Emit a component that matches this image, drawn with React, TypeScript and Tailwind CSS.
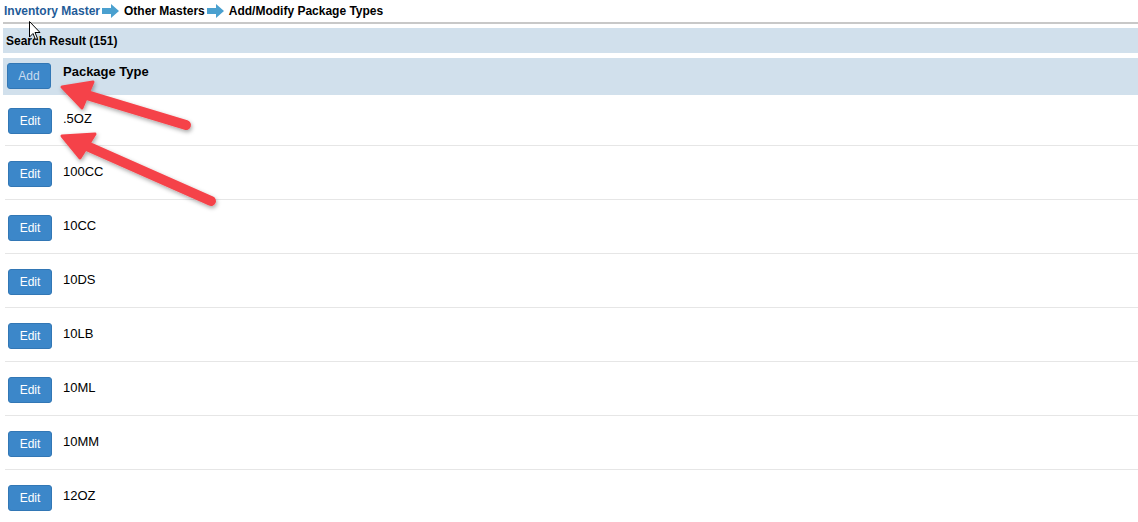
import React from "react"

const items = [".5OZ", "100CC", "10CC", "10DS", "10LB", "10ML", "10MM", "12OZ"]

function CrumbArrow() {
	return (
		<svg width="17" height="14" viewBox="0 0 17 14" className="ml-[2px] mr-[5px] shrink-0">
			<path d="M0 4 H9 V0 L17 7 L9 14 V10 H0 Z" fill="#4aa0cf" />
		</svg>
	)
}

function Btn({ label, dim }: { label: string; dim?: boolean }) {
	return (
		<button
			className={`w-[44px] h-[26px] rounded-[3px] bg-[#3c87c9] border border-[#3277b5] text-[12px] leading-none ${
				dim ? "text-[#c9dcef]" : "text-white"
			}`}
		>
			{label}
		</button>
	)
}

export default function App() {
	return (
		<div className="relative w-[1138px] h-[522px] overflow-hidden bg-white font-['Liberation_Sans',Arial,sans-serif] text-black">
			{/* Breadcrumb */}
			<div className="flex items-center h-[22px] pl-[4px] text-[12px] font-bold">
				<span className="text-[#1f5c98]">Inventory Master</span>
				<CrumbArrow />
				<span>Other Masters</span>
				<CrumbArrow />
				<span>Add/Modify Package Types</span>
			</div>
			<div className="ml-[3px] h-[2px] bg-[#c8c8c8]" />

			{/* Search result bar */}
			<div className="ml-[3px] mt-[4px] h-[25px] bg-[#d1e0ec] flex items-center pl-[3px] text-[12px] font-bold">
				Search Result (151)
			</div>

			{/* Table header */}
			<div className="ml-[3px] mt-[5px] h-[37px] bg-[#d1e0ec] flex items-start pt-[5px] pl-[4px] gap-[12px]">
				<Btn label="Add" dim />
				<span className="text-[13px] font-bold -mt-[1px]">Package Type</span>
			</div>

			{/* Rows */}
			<div className="ml-[5px]">
				{items.map((it, i) => (
					<div
						key={it}
						className={`flex items-center gap-[11px] pl-[3px] border-b border-[#e6e6e6] ${
							i === 0 ? "h-[51px] pt-[1px]" : "h-[54px] pt-[2px]"
						}`}
					>
						<Btn label="Edit" />
						<span className="text-[13px] -mt-[4px]">{it}</span>
					</div>
				))}
			</div>

			{/* Annotation arrows */}
			<svg className="absolute left-0 top-0 pointer-events-none" width="1138" height="522">
				<defs>
					<filter id="sh" x="-20%" y="-20%" width="140%" height="140%">
						<feDropShadow dx="1" dy="2" stdDeviation="2" floodColor="#000" floodOpacity="0.35" />
					</filter>
				</defs>
				<g filter="url(#sh)">
					<line x1="186" y1="125" x2="80" y2="93" stroke="#f5434a" strokeWidth="10" strokeLinecap="round" />
					<path d="M62 87 L93 82 L82 108 Z" fill="#f5434a" stroke="#f5434a" strokeWidth="3" strokeLinejoin="round" />
					<line x1="211" y1="201" x2="80" y2="143" stroke="#f5434a" strokeWidth="10" strokeLinecap="round" />
					<path d="M62 136 L95 134 L80 158 Z" fill="#f5434a" stroke="#f5434a" strokeWidth="3" strokeLinejoin="round" />
				</g>
			</svg>

			{/* Mouse cursor */}
			<svg className="absolute left-[29px] top-[21px] pointer-events-none" width="12" height="20" viewBox="0 0 12 20">
				<path d="M0.5 0.5 V16 L4 12.5 L6.5 18.5 L8.5 17.5 L6 11.5 H11 Z" fill="#fff" stroke="#000" strokeWidth="1" />
			</svg>
		</div>
	)
}
